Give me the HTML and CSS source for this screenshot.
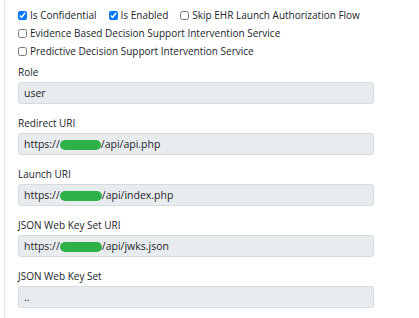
FILE: index.html
```html
<!DOCTYPE html>
<html lang="en">
<head>
    <meta charset="UTF-8">
    <title>Client Settings</title>
    <link rel="stylesheet" href="styles.css">
</head>
<body>
    <div class="panel">
        <div class="checks">
            <label class="check"><input type="checkbox" checked> Is Confidential</label>
            <label class="check"><input type="checkbox" checked> Is Enabled</label>
            <label class="check"><input type="checkbox"> Skip EHR Launch Authorization Flow</label>
        </div>
        <div class="checks">
            <label class="check"><input type="checkbox"> Evidence Based Decision Support Intervention Service</label>
        </div>
        <div class="checks">
            <label class="check"><input type="checkbox"> Predictive Decision Support Intervention Service</label>
        </div>

        <div class="field">
            <label>Role</label>
            <div class="control">user</div>
        </div>
        <div class="field">
            <label>Redirect URI</label>
            <div class="control">https://<span class="blot b1"></span>/api/api.php</div>
        </div>
        <div class="field">
            <label>Launch URI</label>
            <div class="control">https://<span class="blot b2"></span>/api/index.php</div>
        </div>
        <div class="field">
            <label>JSON Web Key Set URI</label>
            <div class="control">https://<span class="blot b3"></span>/api/jwks.json</div>
        </div>
        <div class="field">
            <label>JSON Web Key Set</label>
            <div class="control">..</div>
        </div>
    </div>
</body>
</html>
```

FILE: styles.css
```css
body {
    margin: 0;
    background-color: #fff;
    color: #212529;
    font-family: "Open Sans", "Noto Sans", sans-serif;
    font-size: 10px;
}
.panel {
    margin-left: 4px;
    border-left: 1px solid #e3e6ea;
    padding: 6px 0 20px 13px;
    width: 356px;
}
.checks {
    display: flex;
    gap: 12px;
    height: 18px;
    align-items: center;
}
.check {
    display: flex;
    align-items: center;
    gap: 3px;
}
.check input {
    width: 9px;
    height: 9px;
    margin: 0;
}
.field {
    margin-top: 5px;
}
.field + .field {
    margin-top: 12px;
}
.field label {
    display: block;
    height: 15px;
    line-height: 15px;
    margin-bottom: 2px;
}
.control {
    height: 20px;
    line-height: 20px;
    padding: 0 5px;
    background-color: #e9ecef;
    border: 1px solid #d6dbe0;
    border-radius: 3px;
    font-size: 10.5px;
    color: #212529;
}
.blot {
    display: inline-block;
    vertical-align: middle;
    height: 10px;
    background-color: #2fb14a;
    border-radius: 5px;
}
.b1 {
    width: 41px;
}
.b2 {
    width: 42px;
}
.b3 {
    width: 42px;
}
```
